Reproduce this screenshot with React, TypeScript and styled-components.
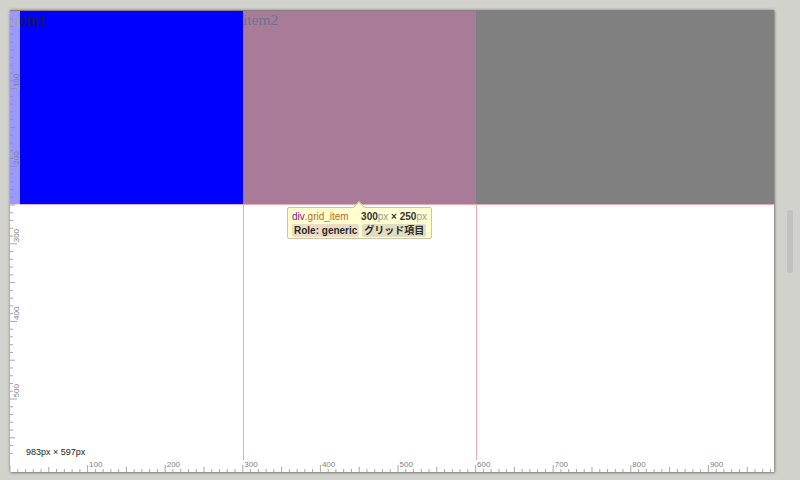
import React from "react";
import styled, { createGlobalStyle } from "styled-components";

const SCALE = 0.776;

const GlobalStyle = createGlobalStyle`
  html, body { margin: 0; padding: 0; }
  body { background: #d2d2cd; font-family: "Liberation Sans", Arial, sans-serif; }
`;

const VRuler = () => {
  const ticks = [];
  for (let v = 0; v <= 590; v += 10) {
    const y = v * SCALE;
    const len = v % 100 === 0 ? 7 : v % 50 === 0 ? 5 : 3;
    ticks.push(<line key={v} x1={0} x2={len} y1={y} y2={y} stroke="#8f8f99" strokeWidth={0.8} />);
    if (v % 100 === 0 && v > 0) {
      ticks.push(
        <text
          key={"t" + v}
          x={0}
          y={0}
          transform={`translate(9 ${y - 1.5}) rotate(-90)`}
          fontSize={8}
          fill="#808088"
          fontFamily="Liberation Sans, Arial, sans-serif"
        >
          {v}
        </text>
      );
    }
  }
  return (
    <svg width="10" height="462">
      {ticks}
    </svg>
  );
};

const HRuler = () => {
  const ticks = [];
  for (let v = 0; v <= 980; v += 10) {
    const x = v * SCALE;
    const len = v % 100 === 0 ? 7 : v % 50 === 0 ? 5 : 3;
    ticks.push(<line key={v} x1={x} x2={x} y1={12} y2={12 - len} stroke="#8f8f8f" strokeWidth={0.8} />);
    if (v % 100 === 0 && v > 0) {
      ticks.push(
        <text key={"t" + v} x={x + 1.5} y={7} fontSize={8} fill="#808080" fontFamily="Liberation Sans, Arial, sans-serif">
          {v}
        </text>
      );
    }
  }
  return (
    <svg width="764" height="12">
      {ticks}
    </svg>
  );
};

const App = () => {
  return (
    <Desktop>
      <GlobalStyle />
      <Window>
        <Grid>
          <Item $bg="#0000ff" $color="#1a1a3c">item1</Item>
          <Item $bg="#a87c99" $color="#6f7090">item2</Item>
          <Item $bg="#808080" $color="#808080">item3</Item>
        </Grid>
        <GridLineH />
        <GridLineV $left={233} />
        <GridLineV $left={466} />
        <SideRuler>
          <VRuler />
        </SideRuler>
        <BottomRuler>
          <HRuler />
        </BottomRuler>
        <SizeLabel>983px × 597px</SizeLabel>
        <Tooltip>
          <TipRow>
            <TagName>div</TagName>
            <ClassName>.grid_item</ClassName>
            <Dims>
              300<Unit>px</Unit> × 250<Unit>px</Unit>
            </Dims>
          </TipRow>
          <TipRow>
            <Badge $bg="#ecdcc4">Role: generic</Badge>
            <Badge $bg="#e0ddc2">グリッド項目</Badge>
          </TipRow>
        </Tooltip>
      </Window>
      <ScrollTrack>
        <Thumb />
      </ScrollTrack>
    </Desktop>
  );
};

const Desktop = styled.div`
  width: 800px;
  height: 480px;
  box-sizing: border-box;
  padding: 10px 0 0 10px;
  display: flex;
  overflow: hidden;
`;

const Window = styled.div`
  position: relative;
  width: 764px;
  height: 462px;
  background: #fff;
  box-shadow: 0 0 3px rgba(0, 0, 0, 0.35), 1px 1px 2px rgba(0, 0, 0, 0.25);
  border-top: 1px solid #8a7f85;
  box-sizing: border-box;
  overflow: hidden;
`;

const Grid = styled.div`
  display: grid;
  grid-template-columns: 233px 233px 298px;
  grid-template-rows: 193px;
`;

const Item = styled.div<{ $bg: string; $color: string }>`
  background: ${(p) => p.$bg};
  color: ${(p) => p.$color};
  font-family: "Liberation Serif", "Times New Roman", serif;
  font-size: 15.5px;
  line-height: 17px;
  &:first-child { padding-left: 1px; }
`;

const GridLineH = styled.div`
  position: absolute;
  left: 0;
  right: 0;
  top: 193px;
  height: 1px;
  background: #eeaab2;
`;

const GridLineV = styled.div<{ $left: number }>`
  position: absolute;
  left: ${(p) => p.$left}px;
  top: 193px;
  height: 257px;
  width: 1px;
  background: #eeaab2;
`;

const SideRuler = styled.div`
  position: absolute;
  left: 0;
  top: 0;
  width: 10px;
  height: 100%;
  background: rgba(255, 255, 255, 0.6);
  display: flex;
`;

const BottomRuler = styled.div`
  position: absolute;
  left: 0;
  bottom: 0;
  width: 100%;
  height: 12px;
  background: #fff;
  display: flex;
`;

const SizeLabel = styled.div`
  position: absolute;
  left: 16px;
  top: 436px;
  font-size: 9px;
  color: #222;
`;

const Tooltip = styled.div`
  position: absolute;
  left: 277px;
  top: 196px;
  width: 145px;
  height: 32px;
  box-sizing: border-box;
  padding: 2px 4px;
  background: #ffffcf;
  border: 1px solid #c9c6a0;
  border-radius: 2px;
  font-size: 10px;
  line-height: 13px;
  display: flex;
  flex-direction: column;
  gap: 1px;

  &::before {
    content: "";
    position: absolute;
    left: 67px;
    top: -5px;
    width: 7px;
    height: 7px;
    background: #ffffcf;
    border-left: 1px solid #c9c6a0;
    border-top: 1px solid #c9c6a0;
    transform: rotate(45deg);
  }
`;

const TipRow = styled.div`
  display: flex;
  align-items: center;
  gap: 3px;
  white-space: nowrap;
`;

const TagName = styled.span`
  color: #881280;
`;

const ClassName = styled.span`
  color: #c0682a;
  margin-left: -3px;
`;

const Dims = styled.span`
  margin-left: auto;
  font-weight: bold;
  color: #333;
`;

const Unit = styled.span`
  font-weight: normal;
  color: #999;
`;

const Badge = styled.span<{ $bg: string }>`
  background: ${(p) => p.$bg};
  color: #2a2a2a;
  font-weight: bold;
  padding: 0 2px;
  border-radius: 2px;
  font-family: "Liberation Sans", "Noto Sans CJK JP", sans-serif;
`;

const ScrollTrack = styled.div`
  margin-left: 13px;
  width: 6px;
  display: flex;
  flex-direction: column;
`;

const Thumb = styled.div`
  margin-top: 200px;
  width: 6px;
  height: 63px;
  border-radius: 3px;
  background: #c2c2be;
`;

export default App;
